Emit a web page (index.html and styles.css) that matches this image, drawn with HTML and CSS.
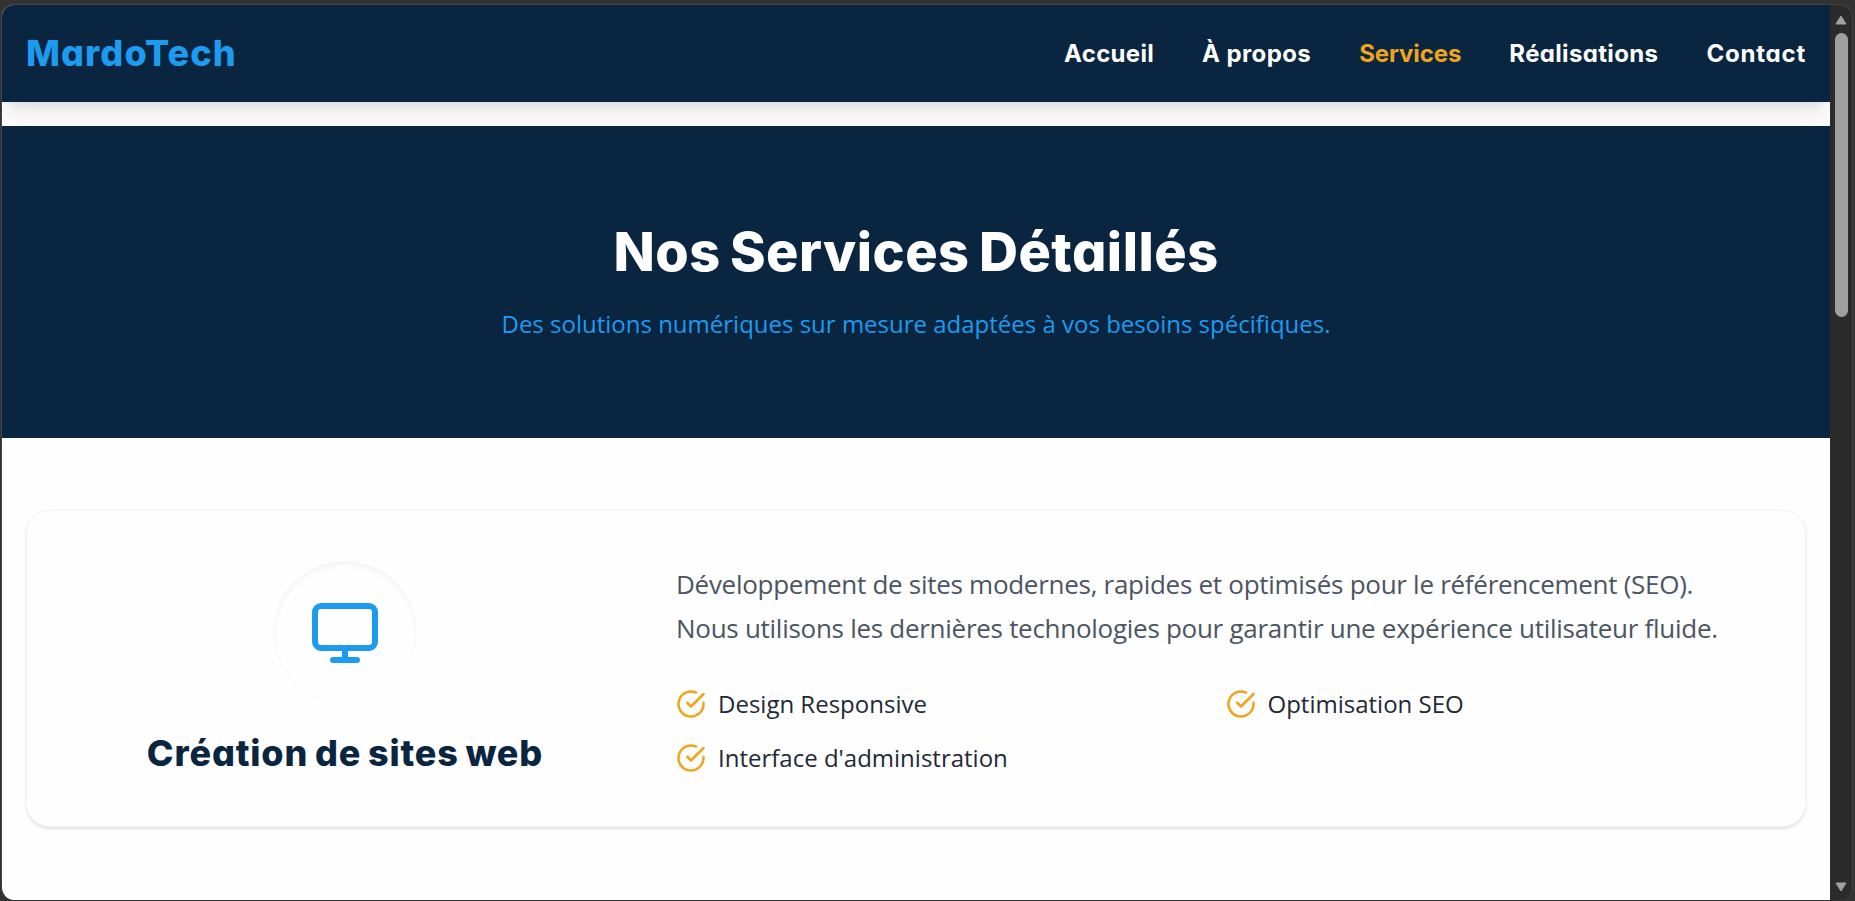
FILE: index.html
```
<!DOCTYPE html>
<html lang="fr">
<head>
<meta charset="utf-8">
<title>MardoTech</title>
<link rel="stylesheet" href="styles.css">
</head>
<body>
<div class="window">
  <div class="page">
    <header class="header">
      <a class="logo">MardoTech</a>
      <nav class="nav">
        <a class="n1">Accueil</a>
        <a class="n2">À propos</a>
        <a class="n3 active">Services</a>
        <a class="n4">Réalisations</a>
        <a class="n5">Contact</a>
      </nav>
    </header>
    <section class="hero">
      <h1><span>Nos Services Détaillés</span></h1>
      <p><span>Des solutions numériques sur mesure adaptées à vos besoins spécifiques.</span></p>
    </section>
    <main class="content">
      <article class="card">
        <div class="summary">
          <div class="badge">
            <svg width="72" height="72" viewBox="0 0 24 24"><rect x="2" y="3" width="20" height="14" rx="2"/><path d="M12 17v4M8 21h8"/></svg>
          </div>
          <h2><span>Création de sites web</span></h2>
        </div>
        <div class="details">
          <p><span class="l1">Développement de sites modernes, rapides et optimisés pour le référencement (SEO).</span><br><span class="l2">Nous utilisons les dernières technologies pour garantir une expérience utilisateur fluide.</span></p>
          <ul>
            <li><svg class="check" viewBox="0 0 24 24"><path d="M22 11.08V12a10 10 0 1 1-5.93-9.14"/><path d="m9 11 3 3L22 4"/></svg><span class="f1">Design Responsive</span></li>
            <li><svg class="check" viewBox="0 0 24 24"><path d="M22 11.08V12a10 10 0 1 1-5.93-9.14"/><path d="m9 11 3 3L22 4"/></svg><span class="f2">Optimisation SEO</span></li>
            <li><svg class="check" viewBox="0 0 24 24"><path d="M22 11.08V12a10 10 0 1 1-5.93-9.14"/><path d="m9 11 3 3L22 4"/></svg><span class="f3">Interface d'administration</span></li>
          </ul>
        </div>
      </article>
    </main>
  </div>
  <div class="scrollbar">
    <svg class="arrow" viewBox="0 0 12 10"><path d="M6 1 11 9H1z"/></svg>
    <div class="thumb"></div>
    <svg class="arrow down" viewBox="0 0 12 10"><path d="M1 1h10L6 9z"/></svg>
  </div>
</div>
</body>
</html>
```
FILE: styles.css
```
* { box-sizing: border-box; }
body {
  margin: 0;
  height: 901px;
  padding: 4px 2px 1px 1px;
  overflow: hidden;
  background: #333;
  font-family: "Open Sans", "Noto Sans", sans-serif;
}
h1, h2, p, ul { margin: 0; padding: 0; }
.window {
  display: flex;
  height: 896px;
  border: 1px solid #444;
  border-bottom: 0;
  border-radius: 13px;
  overflow: hidden;
  background: #2b2b2b;
}
.page { width: 1828px; background: #fefefe; overflow: hidden; }
.header {
  position: relative;
  display: flex;
  justify-content: space-between;
  align-items: center;
  height: 97px;
  margin-bottom: 24px;
  padding: 0 24px;
  background: #0a2540;
  color: #fff;
  box-shadow: 0 15px 22px -4px rgba(0,0,0,.1), 0 6px 9px -6px rgba(0,0,0,.08);
}
.logo, .nav a, h1, h2 {
  font-family: Inter, sans-serif;
  font-feature-settings: "cv11";
  white-space: nowrap;
}
.logo { padding-bottom: 2px; font-size: 36px; font-weight: 800; letter-spacing: 1.1px; color: #1d9bf0; }
.nav { display: flex; gap: 48px; font-size: 24px; font-weight: 700; }
.nav .active { color: #f0a31c; }
.n1 { letter-spacing: .3px; }
.n2 { letter-spacing: .4px; }
.n3 { letter-spacing: -.1px; }
.n4 { letter-spacing: .35px; }
.n5 { letter-spacing: .8px; }
.hero {
  position: relative;
  height: 312px;
  padding-top: 96px;
  background: #0a2540;
  text-align: center;
}
.hero h1 { font-size: 54px; line-height: 60px; font-weight: 800; letter-spacing: .5px; word-spacing: -3px; color: #fff; }
.hero p { margin-top: 24px; font-size: 24px; line-height: 36px; color: #1d9bf0; }
.content { padding: 72px 24px; }
.card {
  display: flex;
  align-items: center;
  gap: 61px;
  height: 317px;
  padding: 0 48px;
  border: 1px solid #f3f4f6;
  border-radius: 24px;
  box-shadow: 0 1.5px 3px rgba(0,0,0,.13);
}
.summary { flex: none; width: 540px; display: flex; flex-direction: column; align-items: center; gap: 24px; }
.badge {
  display: flex;
  align-items: center;
  justify-content: center;
  width: 144px;
  height: 144px;
  border-radius: 50%;
  box-shadow: inset 0 3px 6px rgba(0,0,0,.05);
}
.badge svg { fill: none; stroke: #1d9bf0; stroke-width: 2; stroke-linecap: round; stroke-linejoin: round; }
h2 { font-size: 36px; line-height: 48px; font-weight: 800; letter-spacing: .85px; word-spacing: -2px; color: #0a2540; }
.details { flex: none; width: 1081px; }
.details p { font-size: 26px; letter-spacing: -.28px; line-height: 44px; color: #4b5563; white-space: nowrap; }
.details ul {
  display: grid;
  grid-template-columns: 1fr 1fr;
  gap: 18px;
  margin-top: 36px;
  list-style: none;
}
.details li { display: flex; align-items: center; gap: 12px; font-size: 24px; line-height: 36px; color: #1f2937; }
.check { width: 30px; height: 30px; fill: none; stroke: #f0a31c; stroke-width: 2; stroke-linecap: round; stroke-linejoin: round; }
.scrollbar {
  flex: 1;
  display: flex;
  flex-direction: column;
  align-items: center;
  padding: 10px 0 8px;
}
.arrow { width: 12px; height: 10px; fill: #a0a0a0; stroke: #a0a0a0; stroke-linejoin: round; }
.down { margin-top: auto; }
.thumb { width: 13px; height: 284px; margin-top: 8px; border-radius: 7px; background: #9f9f9f; }
```
